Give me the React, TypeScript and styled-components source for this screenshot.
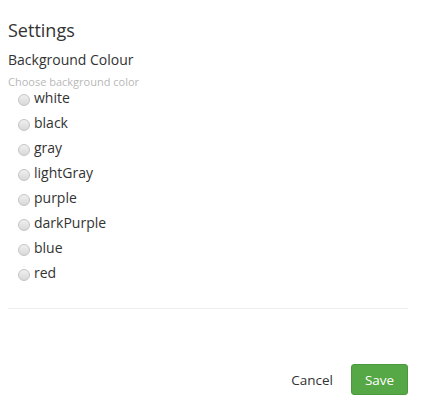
import React, { useState } from 'react';
import styled, { createGlobalStyle } from 'styled-components';

const GlobalStyle = createGlobalStyle`
  html, body {
    margin: 0;
    padding: 0;
    background: #fff;
    font-family: "Open Sans", "Liberation Sans", sans-serif;
    color: #333;
  }
`

const colours = ['white', 'black', 'gray', 'lightGray', 'purple', 'darkPurple', 'blue', 'red']

export default function App() {
    const [colour, setColour] = useState('')

    return (
        <Page>
            <GlobalStyle/>
            <Title>Settings</Title>
            <Section>
                <Label>Background Colour</Label>
                <Hint>Choose background color</Hint>
                <Options>
                    {colours.map(c => (
                        <Option key={c}>
                            <Radio
                                type="radio"
                                name="bg"
                                checked={colour === c}
                                onChange={() => setColour(c)}/>
                            <span>{c}</span>
                        </Option>
                    ))}
                </Options>
            </Section>
            <Divider/>
            <Footer>
                <CancelButton>Cancel</CancelButton>
                <SaveButton>Save</SaveButton>
            </Footer>
        </Page>
    )
}

const Page = styled.div`
  width: 400px;
  padding: 0 15px 0 8px;
  display: flex;
  flex-direction: column;
`

const Title = styled.h2`
  margin: 17px 0 0;
  font-size: 18px;
  font-weight: 400;
  line-height: 26px;
  color: #333;
`

const Section = styled.div`
  display: flex;
  flex-direction: column;
  margin-top: 7px;
`

const Label = styled.div`
  font-size: 14px;
  line-height: 20px;
  color: #333;
`

const Hint = styled.div`
  font-size: 11px;
  line-height: 14px;
  margin-top: 5px;
  color: #b8b8b8;
`

const Options = styled.div`
  display: flex;
  flex-direction: column;
  padding-left: 10px;
  margin-top: -4px;
`

const Option = styled.label`
  display: flex;
  align-items: center;
  gap: 4px;
  height: 25px;
  font-size: 14px;
  color: #333;
`

const Radio = styled.input`
  appearance: none;
  width: 12px;
  height: 12px;
  margin: 4px 0 0;
  border-radius: 50%;
  border: 1px solid #c4c4c4;
  background: linear-gradient(#f0f0f0, #d8d8d8);
  box-sizing: border-box;
  &:checked {
    background: radial-gradient(#444 30%, #e0e0e0 40%);
  }
`

const Divider = styled.hr`
  margin: 23px 0 0;
  border: none;
  border-top: 1px solid #eee;
`

const Footer = styled.div`
  display: flex;
  justify-content: flex-end;
  align-items: center;
  gap: 10px;
  margin-top: 55px;
`

const CancelButton = styled.button`
  border: none;
  background: none;
  font-family: inherit;
  font-size: 13.5px;
  color: #333;
  padding: 6px 8px;
`

const SaveButton = styled.button`
  border: 1px solid #4a9a3d;
  background: #55a845;
  color: #fff;
  font-family: inherit;
  font-size: 13.5px;
  border-radius: 3px;
  width: 57px;
  height: 31px;
  padding: 0;
`
